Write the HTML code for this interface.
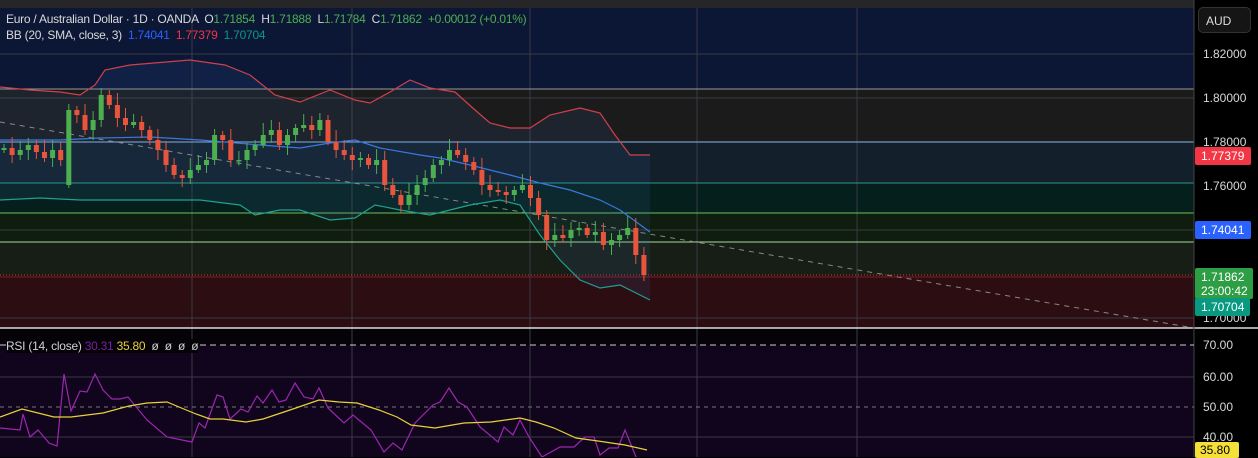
<!DOCTYPE html>
<html><head><meta charset="utf-8"><style>
html,body{margin:0;padding:0;background:#000;width:1258px;height:457px;overflow:hidden;font-family:"Liberation Sans",sans-serif}
.t{position:absolute;font-size:12px;white-space:nowrap}
.h{letter-spacing:-0.25px}
.lbl{position:absolute;left:1195px;width:56px;font-size:12px;color:#fff;padding-left:6px;box-sizing:border-box;border-radius:2px}
</style></head><body>
<svg width="1258" height="457" style="position:absolute;left:0;top:0">
<rect x="0" y="0" width="1258" height="457" fill="#000"/>
<rect x="0" y="0" width="1194" height="8" fill="#262628"/>
<rect x="0" y="8" width="1194" height="81" fill="#0c1736"/>
<rect x="0" y="89" width="1194" height="53" fill="#1b1b1c"/>
<rect x="0" y="142" width="1194" height="41" fill="#131f2b"/>
<rect x="0" y="183" width="1194" height="30" fill="#05201c"/>
<rect x="0" y="213" width="1194" height="29" fill="#0f1d0e"/>
<rect x="0" y="242" width="1194" height="33" fill="#171e15"/>
<rect x="0" y="275" width="1194" height="53" fill="#2c0e12"/>
<rect x="0" y="329" width="1194" height="128" fill="#10051c"/>
<rect x="0" y="329" width="1194" height="16" fill="#050308"/>
<g stroke="#3a3a44" stroke-width="1">
<line x1="192" y1="8" x2="192" y2="457"/><line x1="352" y1="8" x2="352" y2="457"/><line x1="530" y1="8" x2="530" y2="457"/><line x1="697" y1="8" x2="697" y2="457"/><line x1="857" y1="8" x2="857" y2="457"/>
<line x1="0" y1="54" x2="1194" y2="54"/><line x1="0" y1="98" x2="1194" y2="98"/><line x1="0" y1="230" x2="1194" y2="230"/><line x1="0" y1="318" x2="1194" y2="318"/>
<line x1="0" y1="377" x2="1194" y2="377"/><line x1="0" y1="437" x2="1194" y2="437"/>
</g>
<line x1="0" y1="89" x2="1194" y2="89" stroke="#9a9a9a"/>
<line x1="0" y1="142" x2="1194" y2="142" stroke="#8ab8e8"/>
<line x1="0" y1="183" x2="1194" y2="183" stroke="#2a9a8a"/>
<line x1="0" y1="213" x2="1194" y2="213" stroke="#6cc060"/>
<line x1="0" y1="242" x2="1194" y2="242" stroke="#a8d8a0"/>
<line x1="0" y1="275" x2="1194" y2="275" stroke="#c04040" stroke-dasharray="1,2"/>
<line x1="0" y1="277" x2="1194" y2="277" stroke="#7a2020"/>
<line x1="0" y1="328" x2="1258" y2="328" stroke="#ddd" stroke-width="1.5"/>
<line x1="1194" y1="0" x2="1194" y2="457" stroke="#444"/>
<line x1="0" y1="345" x2="1194" y2="345" stroke="#ccc" stroke-dasharray="6,4"/>
<line x1="0" y1="407" x2="1194" y2="407" stroke="#777" stroke-dasharray="4,4"/>
<polygon fill="rgba(60,110,180,0.12)" points="0,87 30,90 60,92 80,95 95,85 105,70 130,65 190,60 225,65 250,75 275,95 300,102 330,90 355,100 370,103 390,92 410,80 430,88 455,92 475,110 490,123 510,128 530,128 550,115 580,108 600,113 615,135 630,155 650,155 650,300 620,285 600,288 580,280 560,260 540,235 520,205 500,200 470,205 450,210 430,215 400,210 375,205 355,218 330,220 300,210 280,210 255,215 240,205 200,200 160,200 120,200 80,200 40,198 0,200"/>
<line x1="0" y1="122" x2="1194" y2="328" stroke="#888" stroke-dasharray="5,5"/>
<polyline fill="none" stroke="#d0404a" stroke-width="1.2" points="0,87 30,90 60,92 80,95 95,85 105,70 130,65 190,60 225,65 250,75 275,95 300,102 330,90 355,100 370,103 390,92 410,80 430,88 455,92 475,110 490,123 510,128 530,128 550,115 580,108 600,113 615,135 630,155 650,155"/>
<polyline fill="none" stroke="#3a78e0" stroke-width="1.2" points="0,140 60,140 100,138 150,137 200,140 260,145 300,148 330,143 355,140 380,148 420,155 440,158 470,165 510,175 540,183 570,190 600,200 620,210 650,232"/>
<polyline fill="none" stroke="#20a090" stroke-width="1.2" points="0,200 40,198 80,200 120,200 160,200 200,200 240,205 255,215 280,210 300,210 330,220 355,218 375,205 400,210 430,215 450,210 470,205 500,200 520,205 540,235 560,260 580,280 600,288 620,285 650,300"/>
<g id="candles"></g>
<polyline fill="none" stroke="#9c27b0" stroke-width="1.2" points="0,428 20,430 23,414 30,437 38,430 49,443 57,446 64,374 71,411 80,391 87,392 95,374 103,390 112,399 120,399 128,397 147,420 167,437 192,442 199,423 205,428 217,395 223,397 230,419 241,409 248,412 257,396 263,403 272,390 279,402 286,400 295,383 304,397 313,399 319,388 328,408 344,423 353,415 371,430 384,452 393,443 402,450 415,423 433,405 440,402 449,388 458,402 467,407 480,427 498,442 504,427 513,435 520,420 529,437 542,457 560,447 574,447 585,437 594,437 600,455 609,448 618,448 625,430 636,457"/>
<polyline fill="none" stroke="#e8d23a" stroke-width="1.2" points="0,417 22,409 54,417 71,417 103,413 129,406 147,403 167,402 179,407 196,414 210,419 223,419 246,422 263,419 290,410 319,400 339,402 357,403 379,410 397,417 411,425 435,428 464,423 491,422 520,418 536,422 554,428 576,438 598,441 625,445 647,450"/>
</svg>
<div class="t h" style="left:6px;top:12px;color:#d8d8d8">Euro / Australian Dollar · 1D · OANDA &nbsp;O<span style="color:#4caf50">1.71854</span> &nbsp;H<span style="color:#4caf50">1.71888</span> &nbsp;L<span style="color:#4caf50">1.71784</span> &nbsp;C<span style="color:#4caf50">1.71862</span> &nbsp;<span style="color:#4caf50">+0.00012 (+0.01%)</span></div>
<div class="t h" style="left:6px;top:28px;color:#d8d8d8">BB (20, SMA, close, 3) &nbsp;<span style="color:#2962ff">1.74041</span> &nbsp;<span style="color:#f23645">1.77379</span> &nbsp;<span style="color:#089981">1.70704</span></div>
<div class="t h" style="left:6px;top:339px;color:#d0d0d0;background:#050308">RSI (14, close) <span style="color:#7b1fa2">30.31</span> <span style="color:#e8d23a">35.80</span> &nbsp;ø &nbsp;ø &nbsp;ø &nbsp;ø</div>
<div style="position:absolute;left:1198px;top:7px;width:53px;height:26px;border:1px solid #333;border-radius:5px;background:#151515;color:#ddd;font-size:12px;line-height:26px;box-sizing:border-box;padding-left:7px">AUD</div>
<div class="t" style="left:1203px;top:47px;color:#d8d8d8">1.82000</div>
<div class="t" style="left:1203px;top:91px;color:#d8d8d8">1.80000</div>
<div class="t" style="left:1203px;top:135px;color:#d8d8d8">1.78000</div>
<div class="t" style="left:1203px;top:179px;color:#d8d8d8">1.76000</div>
<div class="t" style="left:1203px;top:311px;color:#d8d8d8">1.70000</div>
<div class="lbl" style="top:147px;height:18px;line-height:18px;background:#f23645">1.77379</div>
<div class="lbl" style="top:221px;height:18px;line-height:18px;background:#2962ff">1.74041</div>
<div class="lbl" style="top:268px;height:31px;line-height:14px;padding-top:2px;background:#2e9e45;width:58px">1.71862<br>23:00:42</div>
<div class="lbl" style="top:298px;height:18px;line-height:18px;background:#089981;width:55px">1.70704</div>
<div class="t" style="left:1203px;top:338px;color:#d8d8d8">70.00</div>
<div class="t" style="left:1203px;top:370px;color:#d8d8d8">60.00</div>
<div class="t" style="left:1203px;top:400px;color:#d8d8d8">50.00</div>
<div class="t" style="left:1203px;top:430px;color:#d8d8d8">40.00</div>
<div class="lbl" style="top:442px;height:16px;line-height:16px;background:#f5e03a;color:#000;width:44px;padding-left:5px">35.80</div>
<script>
var c=[148,155,150,145,152,158,150,160,110,115,130,120,95,105,118,125,122,130,140,150,165,175,178,170,165,160,135,140,160,160,150,145,135,130,145,135,128,125,130,120,142,150,155,160,158,165,160,185,195,205,195,185,178,165,160,150,155,162,170,185,190,192,195,190,185,198,215,240,235,238,230,228,235,232,245,240,235,228,255,275];
var s='',p=150;
for(var i=0;i<c.length;i++){var x=4+i*8.1,o=p,cl=c[i];if(i==8)o=185;if(Math.abs(o-cl)<1.5)o=cl+1.5;
var up=cl<o,col=up?'#4caf50':'#e8553c',t=Math.min(o,cl),b=Math.max(o,cl);
var h=t-4-((i*7)%9),l=b+3+((i*5)%8);
s+='<line x1="'+x+'" y1="'+h+'" x2="'+x+'" y2="'+l+'" stroke="'+col+'" stroke-width="1"/>';
s+='<rect x="'+(x-2.5)+'" y="'+t+'" width="5" height="'+(b-t)+'" fill="'+col+'"/>';p=cl;}
document.getElementById('candles').innerHTML=s;
</script>
</body></html>
